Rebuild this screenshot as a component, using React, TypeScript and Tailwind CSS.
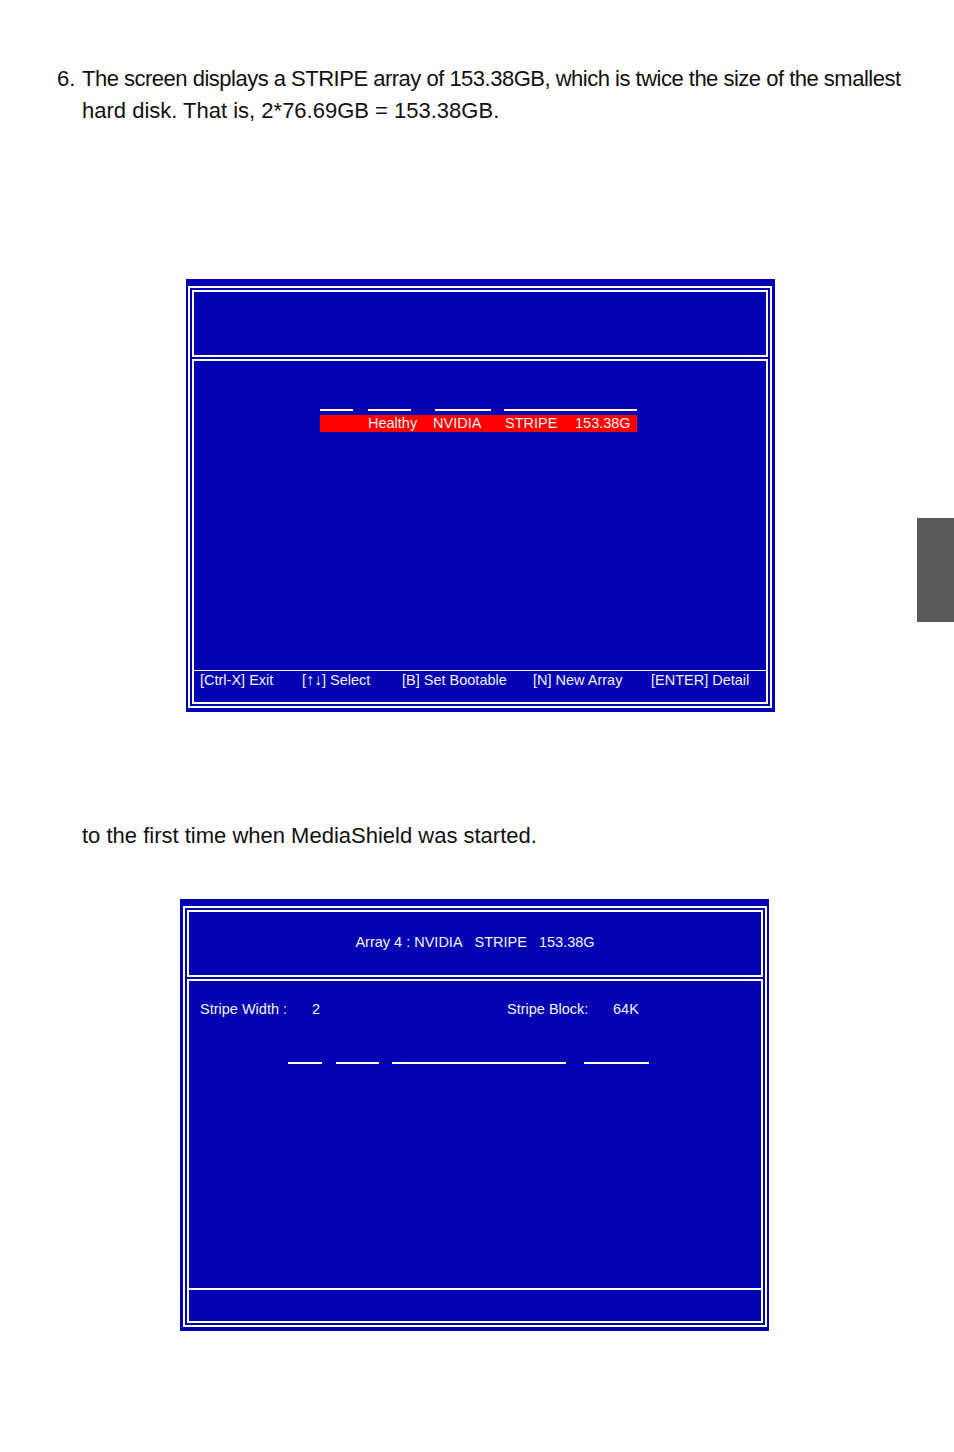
import React from "react";

const BLUE = "bg-[#0202b2]";

function Screen({
  header,
  body,
  footer,
  pad,
  dividerThick,
}: {
  header?: React.ReactNode;
  body?: React.ReactNode;
  footer?: React.ReactNode;
  pad: string;
  dividerThick?: boolean;
}) {
  return (
    <div className={`w-[589px] ${BLUE} ${pad} text-[#f2f2f2] text-[14.5px]`}>
      <div className="h-full border-2 border-white p-[2px] flex flex-col gap-[2px]">
        <div className="h-[67px] shrink-0 border-2 border-white">{header}</div>
        <div className="flex-1 border-2 border-white flex flex-col">
          <div className="flex-1">{body}</div>
          <div className={dividerThick ? "h-[2px] bg-white" : "h-px bg-white"} />
          <div className="h-[31px] shrink-0">{footer}</div>
        </div>
      </div>
    </div>
  );
}

export default function App() {
  return (
    <div
      className="relative w-[954px] h-[1452px] bg-white overflow-hidden text-[#111]"
      style={{ fontFamily: '"Liberation Sans", Arial, sans-serif' }}
    >
      {/* step text */}
      <div className="pt-[63px] pl-[57px] flex text-[22px] leading-[32px]">
        <span className="w-[25px] shrink-0">6.</span>
        <div className="whitespace-nowrap">
          <div className="tracking-[-0.5px]">
            The screen displays a STRIPE array of 153.38GB, which is twice the size of the smallest
          </div>
          <div>hard disk. That is, 2*76.69GB = 153.38GB.</div>
        </div>
      </div>

      {/* array list screen */}
      <div className="mt-[152px] ml-[186px] h-[433px] flex">
        <Screen
          pad="pt-[7px] pb-[4px] pl-[2px] pr-[3px]"
          body={
            <div className="pt-[48px] pl-[126px]">
              <div className="w-[317px] flex">
                <div className="w-[33px] h-[2px] bg-white" />
                <div className="ml-[15px] w-[43px] h-[2px] bg-white" />
                <div className="ml-[24px] w-[56px] h-[2px] bg-white" />
                <div className="ml-[13px] w-[133px] h-[2px] bg-white" />
              </div>
              <div className="mt-[4px] w-[317px] h-[17px] bg-[#ff0000] flex leading-[17px] pl-[48px] whitespace-nowrap">
                <span className="w-[65px]">Healthy</span>
                <span className="w-[72px]">NVIDIA</span>
                <span className="w-[70px]">STRIPE</span>
                <span>153.38G</span>
              </div>
            </div>
          }
          footer={
            <div className="flex pl-[6px] leading-[18px] whitespace-nowrap">
              <span className="w-[102px]">[Ctrl-X] Exit</span>
              <span className="w-[100px]">
                [<span className="text-[16px] leading-[16px]">↑↓</span>] Select
              </span>
              <span className="w-[131px]">[B] Set Bootable</span>
              <span className="w-[118px]">[N] New Array</span>
              <span>[ENTER] Detail</span>
            </div>
          }
        />
      </div>

      <div className="mt-[108px] pl-[82px] text-[22px] leading-[32px] whitespace-nowrap">
        to the first time when MediaShield was started.
      </div>

      {/* array detail screen */}
      <div className="mt-[47px] ml-[180px] h-[432px] flex">
        <Screen
          pad="pt-[7px] pb-[4px] pl-[3px] pr-[2px]"
          dividerThick
          header={
            <div className="pt-[21px] flex justify-center gap-[12px] leading-[18px] whitespace-nowrap">
              <span>Array 4 : NVIDIA</span>
              <span>STRIPE</span>
              <span>153.38G</span>
            </div>
          }
          body={
            <div className="pt-[19px]">
              <div className="flex pl-[11px] leading-[18px] whitespace-nowrap">
                <span className="w-[112px]">Stripe Width :</span>
                <span className="w-[195px]">2</span>
                <span className="w-[106px]">Stripe Block:</span>
                <span>64K</span>
              </div>
              <div className="mt-[44px] flex">
                <div className="ml-[99px] w-[34px] h-[1.5px] bg-white" />
                <div className="ml-[14px] w-[43px] h-[1.5px] bg-white" />
                <div className="ml-[13px] w-[174px] h-[2px] bg-white" />
                <div className="ml-[18px] w-[65px] h-[1.5px] bg-white" />
              </div>
            </div>
          }
        />
      </div>

      {/* chapter tab */}
      <div className="absolute left-[917px] top-[518px] w-[37px] h-[104px] bg-[#595959]" />
    </div>
  );
}
